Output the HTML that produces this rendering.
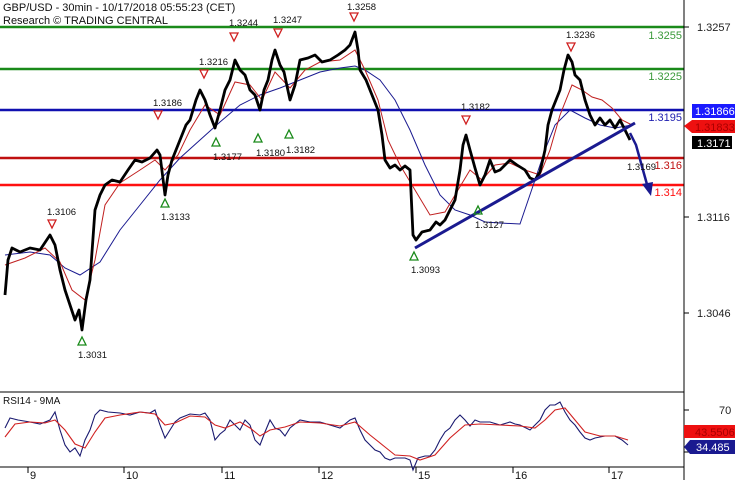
<!DOCTYPE html>
<html><head><meta charset="utf-8"><style>
html,body{margin:0;padding:0;background:#fff;width:735px;height:480px;overflow:hidden}
svg{display:block;font-family:"Liberation Sans",Arial,sans-serif}
</style></head><body>
<svg width="735" height="480" viewBox="0 0 735 480" xmlns="http://www.w3.org/2000/svg">
<rect width="735" height="480" fill="#fff"/>
<line x1="0" y1="27" x2="684" y2="27" stroke="#1a8a1a" stroke-width="2.5"/>
<line x1="0" y1="69" x2="684" y2="69" stroke="#1a8a1a" stroke-width="2.5"/>
<line x1="0" y1="110" x2="684" y2="110" stroke="#1010b0" stroke-width="2.5"/>
<line x1="0" y1="158" x2="684" y2="158" stroke="#c01010" stroke-width="2.5"/>
<line x1="0" y1="185" x2="684" y2="185" stroke="#ff1010" stroke-width="2.5"/>
<text x="3" y="11" font-size="11" fill="#111">GBP/USD - 30min - 10/17/2018 05:55:23 (CET)</text>
<text x="3" y="24" font-size="11" fill="#111">Research © TRADING CENTRAL</text>
<polyline fill="none" stroke="#1a1a90" stroke-width="1" points="5,255 30,252 50,255 65,268 80,275 100,262 120,230 140,205 160,180 180,158 200,140 220,122 240,105 260,95 280,88 300,80 320,72 340,68 355,66 365,70 380,80 395,100 410,130 425,165 440,195 455,210 470,215 485,222 500,223 520,224 535,180 545,150 555,125 570,110 585,118 600,125 615,128 632,125"/>
<polyline fill="none" stroke="#c02020" stroke-width="1" points="5,265 25,258 45,248 60,262 72,290 85,300 95,260 105,205 120,183 140,170 155,160 165,170 178,155 190,130 205,105 220,115 235,82 250,85 262,100 275,72 290,88 305,70 320,62 340,60 355,50 365,70 378,100 388,140 400,165 415,190 430,215 445,212 458,190 470,170 482,180 495,165 510,163 525,170 540,175 550,150 560,115 572,85 582,90 592,97 602,100 612,108 622,120 632,125"/>
<polyline fill="none" stroke="#000" stroke-width="2.8" stroke-linejoin="round" points="5,295 8,260 12,248 20,252 30,248 40,250 50,235 55,245 60,270 65,290 70,305 75,320 79,310 82,330 86,300 90,280 95,210 100,195 105,185 112,180 120,182 128,170 135,160 142,162 150,158 157,150 160,155 165,195 168,175 172,160 176,150 180,140 186,125 190,120 196,100 200,90 205,100 210,115 215,128 220,110 225,90 230,80 235,60 240,70 245,75 250,90 255,95 260,110 264,90 268,80 272,60 275,50 280,65 284,72 290,100 295,85 300,60 308,58 315,55 322,62 330,60 338,55 345,50 350,45 355,32 358,50 360,70 366,80 370,90 374,100 378,110 382,135 385,160 390,168 395,165 400,170 405,166 410,170 413,235 416,240 422,232 430,230 436,222 440,225 445,220 450,210 455,200 460,170 463,145 466,135 470,150 475,168 480,185 485,175 490,160 495,172 500,170 505,165 510,160 517,165 525,170 530,178 535,180 540,172 545,150 548,125 552,110 556,100 560,90 564,70 568,55 572,62 575,75 580,80 585,100 590,115 595,125 600,118 605,125 610,120 615,128 620,120 625,130 630,140"/>
<line x1="415" y1="248" x2="635" y2="123" stroke="#1a1a90" stroke-width="3"/>
<polyline fill="none" stroke="#1a1a90" stroke-width="2.5" points="630,133 636,145 648,188"/>
<polygon points="642,184 653,182 651,196" fill="#1a1a90"/>
<g fill="none" stroke-width="1.3">
<g stroke="#d02020">
<polygon points="48,220 56,220 52,228"/><polygon points="154,111 162,111 158,119"/><polygon points="200,70 208,70 204,78"/>
<polygon points="230,33 238,33 234,41"/><polygon points="274,29 282,29 278,37"/><polygon points="350,13 358,13 354,21"/>
<polygon points="462,116 470,116 466,124"/><polygon points="567,43 575,43 571,51"/>
</g>
<g stroke="#1a8a1a">
<polygon points="78,345 86,345 82,337"/><polygon points="161,207 169,207 165,199"/><polygon points="212,146 220,146 216,138"/>
<polygon points="254,142 262,142 258,134"/><polygon points="285,138 293,138 289,130"/><polygon points="410,260 418,260 414,252"/>
<polygon points="474,214 482,214 478,206"/>
</g>
</g>
<g font-size="9.5" fill="#111">
<text x="47" y="215">1.3106</text><text x="78" y="358">1.3031</text><text x="161" y="220">1.3133</text>
<text x="153" y="106">1.3186</text><text x="199" y="65">1.3216</text><text x="213" y="160">1.3177</text>
<text x="229" y="26">1.3244</text><text x="256" y="156">1.3180</text><text x="273" y="23">1.3247</text>
<text x="286" y="153">1.3182</text><text x="347" y="10">1.3258</text><text x="411" y="273">1.3093</text>
<text x="461" y="110">1.3182</text><text x="475" y="228">1.3127</text><text x="566" y="38">1.3236</text>
<text x="627" y="170">1.3169</text>
</g>
<g font-size="11">
<text x="682" y="39" fill="#3a9a3a" text-anchor="end">1.3255</text>
<text x="682" y="80" fill="#3a9a3a" text-anchor="end">1.3225</text>
<text x="682" y="121" fill="#2020b0" text-anchor="end">1.3195</text>
<text x="682" y="169" fill="#c01010" text-anchor="end">1.316</text>
<text x="682" y="196" fill="#ff1010" text-anchor="end">1.314</text>
</g>
<line x1="684" y1="0" x2="684" y2="480" stroke="#000" stroke-width="1"/>
<g stroke="#000"><line x1="684" y1="27" x2="689" y2="27"/><line x1="684" y1="217" x2="689" y2="217"/><line x1="684" y1="313" x2="689" y2="313"/><line x1="684" y1="410" x2="689" y2="410"/><line x1="684" y1="452" x2="689" y2="452"/></g>
<g font-size="11" fill="#222">
<text x="697" y="31">1.3257</text><text x="697" y="221">1.3116</text><text x="697" y="317">1.3046</text>
<text x="719" y="414">70</text>
</g>
<rect x="692" y="104" width="43" height="14" fill="#1a1aff"/><text x="695" y="115" font-size="11" fill="#fff">1.31866</text>
<polygon points="684,126 692,120 735,120 735,133 692,133" fill="#ee1010"/><text x="695" y="131" font-size="11" fill="#a00">1.31833</text>
<rect x="692" y="136" width="40" height="13" fill="#000"/><text x="697" y="147" font-size="11" fill="#fff">1.3171</text>
<line x1="0" y1="392" x2="684" y2="392" stroke="#000"/>
<line x1="0" y1="467" x2="684" y2="467" stroke="#000"/>
<text x="3" y="404" font-size="10" fill="#111">RSI14 - 9MA</text>
<polyline fill="none" stroke="#1a1a70" stroke-width="1.1" points="5,428 10,418 18,420 30,422 40,424 50,420 55,412 60,430 65,445 70,452 75,448 80,456 85,440 90,430 95,415 100,410 108,412 120,413 130,415 140,412 150,413 155,410 160,425 165,438 170,430 175,422 180,418 190,414 200,415 205,413 210,420 215,440 220,434 225,430 230,420 235,425 240,430 245,420 250,425 255,440 260,445 265,432 270,420 275,428 280,430 285,436 290,428 300,420 310,422 320,422 330,425 340,428 350,420 355,418 360,430 365,440 370,445 375,450 380,452 385,458 390,460 395,458 400,458 405,458 410,460 413,470 418,458 425,456 430,456 435,450 440,440 445,432 450,428 455,420 460,415 465,420 470,426 475,420 480,422 490,422 500,425 510,422 515,424 520,425 530,430 535,425 540,420 545,410 550,405 555,405 560,402 565,412 570,420 575,425 580,432 585,438 590,440 595,438 605,436 615,436 622,440 628,445"/>
<polyline fill="none" stroke="#d02020" stroke-width="1.1" points="5,437 15,424 30,422 45,423 55,420 65,430 75,444 85,448 95,432 105,418 120,415 140,412 155,414 165,425 175,423 190,416 205,417 215,425 225,428 240,422 250,428 260,436 270,430 285,427 300,422 320,423 340,426 355,422 370,435 385,447 395,455 410,456 420,460 435,455 450,438 465,425 480,424 500,425 520,426 535,428 545,420 555,410 565,408 575,420 585,432 600,436 615,436 628,440"/>
<rect x="684" y="425" width="51" height="13" fill="#ee1010"/><text x="695" y="436" font-size="11" fill="#a00">43.5506</text>
<polygon points="684,447 690,440 735,440 735,454 690,454" fill="#1a1a90"/><text x="696" y="451" font-size="11" fill="#fff">34.485</text>
<g stroke="#000"><line x1="28" y1="467" x2="28" y2="473"/><line x1="124" y1="467" x2="124" y2="473"/><line x1="222" y1="467" x2="222" y2="473"/><line x1="319" y1="467" x2="319" y2="473"/><line x1="416" y1="467" x2="416" y2="473"/><line x1="513" y1="467" x2="513" y2="473"/><line x1="609" y1="467" x2="609" y2="473"/></g>
<g font-size="11" fill="#111"><text x="30" y="479">9</text><text x="126" y="479">10</text><text x="224" y="479">11</text><text x="321" y="479">12</text><text x="418" y="479">15</text><text x="515" y="479">16</text><text x="611" y="479">17</text></g>
</svg>
</body></html>
